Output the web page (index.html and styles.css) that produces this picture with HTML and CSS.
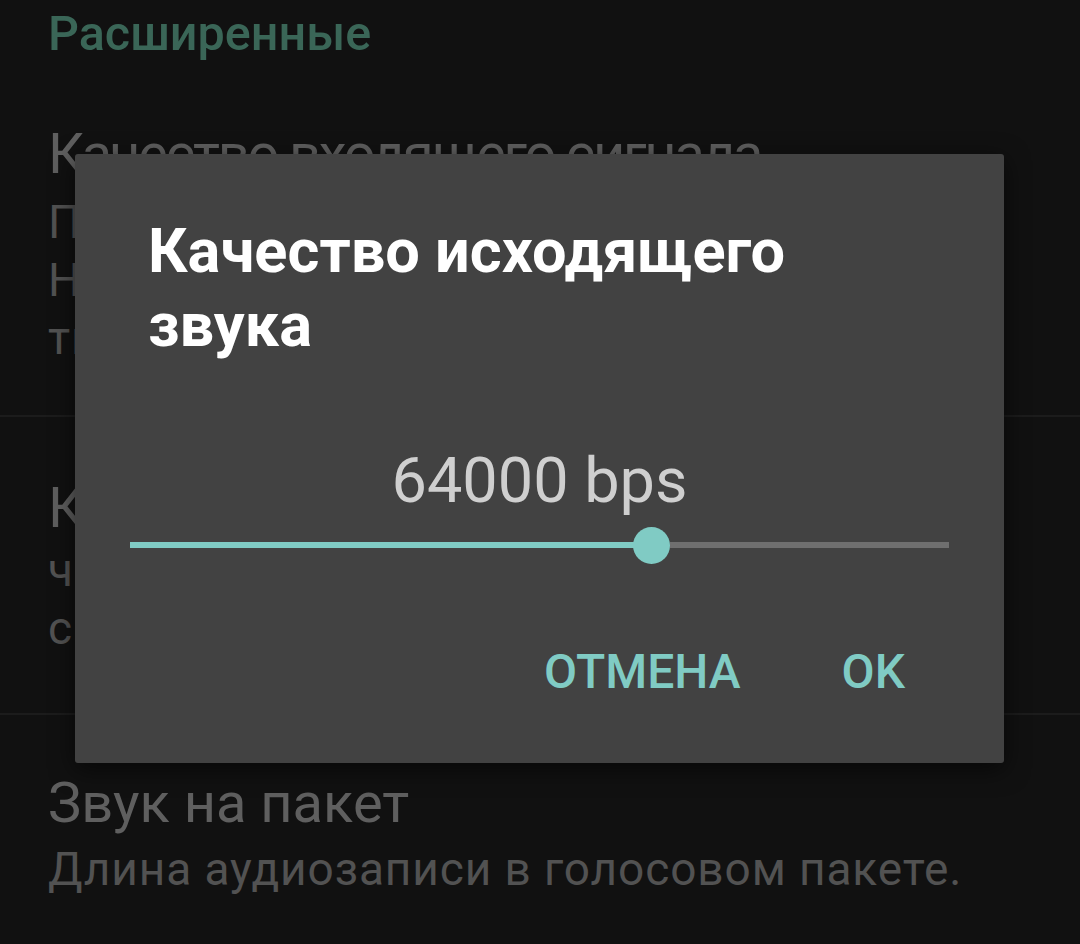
FILE: index.html
```html
<!DOCTYPE html>
<html lang="ru">
<head>
    <meta charset="UTF-8">
    <meta name="viewport" content="width=device-width, initial-scale=1.0">
    <title>Настройки</title>
    <link rel="stylesheet" href="styles.css">
</head>
<body>
    <div class="settings">
        <h2 class="category">Расширенные</h2>

        <div class="pref first">
            <div class="pref-title">Качество входящего сигнала</div>
            <div class="pref-summary">Предварительная обработка звука.<br>Настройка шумоподавления<br>тишины.</div>
        </div>
        <div class="pref second">
            <div class="pref-title">Качество исходящего звука</div>
            <div class="pref-summary">частота дискретизации<br>сигнала.</div>
        </div>
        <div class="pref last">
            <div class="pref-title">Звук на пакет</div>
            <div class="pref-summary">Длина аудиозаписи в голосовом пакете.</div>
        </div>
    </div>

    <div class="dialog">
        <h1 class="dialog-title">Качество исходящего звука</h1>
        <div class="value">64000 bps</div>
        <div class="slider">
            <div class="track-active"></div>
            <div class="thumb"></div>
            <div class="track-rest"></div>
        </div>
        <div class="actions">
            <button type="button">ОТМЕНА</button>
            <button type="button">OK</button>
        </div>
    </div>
</body>
</html>
```

FILE: styles.css
```css
body {
    font-family: Roboto, "Noto Sans", sans-serif;
    margin: 0;
    padding: 0;
    background-color: #111111;
    height: 944px;
    overflow: hidden;
}
.settings {
    padding: 0 48px;
}
.category {
    margin: 0;
    padding-top: 8px;
    font-size: 48.5px;
    line-height: 52px;
    font-weight: 500;
    color: #3a6657;
}
.pref {
    margin: 0 -48px;
    padding: 58px 48px 52px;
    border-bottom: 2px solid #1c1c1c;
}
.pref.first {
    padding-top: 62px;
    padding-bottom: 48px;
}
.pref.first .pref-title {
    letter-spacing: -2.2px;
}
.pref.second {
    padding-top: 59px;
    padding-bottom: 56px;
}
.pref.last {
    border-bottom: none;
    padding-top: 56px;
}
.pref-title {
    font-size: 56px;
    line-height: 64px;
    color: #5f5f5f;
    white-space: nowrap;
}
.pref-summary {
    margin-top: 7px;
    font-size: 46px;
    line-height: 58px;
    letter-spacing: 0.9px;
    color: #525252;
    white-space: nowrap;
}
.pref.second .pref-summary {
    margin-top: 1px;
}
.pref.last .pref-summary {
    margin-top: 5px;
}
.dialog {
    position: absolute;
    left: 75px;
    top: 154px;
    width: 929px;
    height: 609px;
    box-sizing: border-box;
    padding: 60px 73px 0;
    background-color: #424242;
    border-radius: 3px;
    box-shadow: 0 6px 24px rgba(0, 0, 0, 0.6);
}
.dialog-title {
    margin: 0;
    font-size: 61.3px;
    line-height: 74px;
    font-weight: 700;
    color: #ffffff;
}
.value {
    margin-top: 84px;
    text-align: center;
    font-size: 63px;
    line-height: 70px;
    color: #cfcfcf;
}
.slider {
    display: flex;
    align-items: center;
    margin: 10px -18px 0;
    height: 38px;
}
.track-active {
    width: 504px;
    height: 6px;
    background-color: #80cbc4;
}
.thumb {
    width: 37px;
    height: 37px;
    margin-left: -1px;
    border-radius: 50%;
    background-color: #80cbc4;
    flex-shrink: 0;
}
.track-rest {
    flex: 1;
    height: 6px;
    background-color: #6f6f6f;
}
.actions {
    display: flex;
    justify-content: flex-end;
    gap: 101px;
    margin-top: 80px;
    margin-right: 26px;
}
.actions button {
    background: none;
    border: none;
    padding: 0;
    font-family: Roboto, sans-serif;
    font-size: 48px;
    line-height: 56px;
    font-weight: 500;
    color: #80cbc4;
    cursor: pointer;
}
```
